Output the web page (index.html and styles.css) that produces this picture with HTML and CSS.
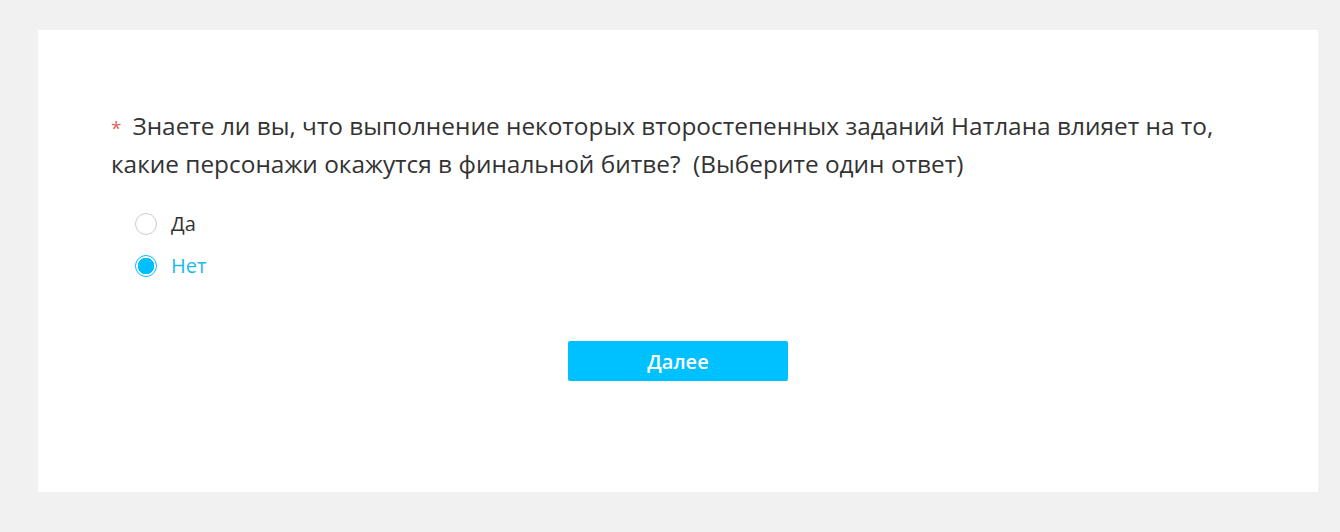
FILE: index.html
```html
<!DOCTYPE html>
<html lang="ru">
  <head>
    <meta charset="UTF-8" />
    <title>Опрос</title>
    <link rel="stylesheet" href="styles.css">
  </head>
  <body>
    <div class="card">
      <div class="question">
        <span class="required">*</span>Знаете ли вы, что выполнение некоторых второстепенных заданий Натлана влияет на то,
        какие персонажи окажутся в финальной битве?&nbsp;&nbsp;(Выберите один ответ)
      </div>

      <div class="options">
        <label class="option">
          <span class="radio"></span>
          <span class="label">Да</span>
        </label>
        <label class="option checked">
          <span class="radio"></span>
          <span class="label">Нет</span>
        </label>
      </div>

      <div class="actions">
        <button class="next">Далее</button>
      </div>
    </div>
  </body>
</html>
```

FILE: styles.css
```css
body {
  margin: 0;
  padding: 30px 22px 40px 38px;
  background: #f1f1f1;
  font-family: "Open Sans", "Noto Sans", sans-serif;
  color: #333;
}
.card {
  background: white;
  width: 1280px;
  height: 462px;
  box-sizing: border-box;
  padding: 77px 73px 0 73px;
}
.question {
  font-size: 24.4px;
  line-height: 38px;
  color: #333;
}
.required {
  display: inline-block;
  color: #e8625e;
  font-size: 19px;
  line-height: 1;
  margin-right: 11px;
}
.options {
  margin-top: 30px;
  padding-left: 24px;
  display: flex;
  flex-direction: column;
  gap: 20px;
}
.option {
  display: flex;
  align-items: center;
  gap: 14px;
  font-size: 20px;
  line-height: 22px;
  cursor: pointer;
}
.radio {
  width: 22px;
  height: 22px;
  box-sizing: border-box;
  border: 1px solid #ccc;
  border-radius: 50%;
  background: white;
}
.option.checked .radio {
  border-color: #00bfff;
  background: radial-gradient(circle, #00bfff 0 8px, white 8.5px);
}
.option.checked .label {
  color: #1cb8f0;
}
.actions {
  margin-top: 64px;
  display: flex;
  justify-content: center;
}
.next {
  width: 220px;
  height: 40px;
  border: none;
  border-radius: 2px;
  background: #00c1ff;
  color: white;
  font-family: inherit;
  font-size: 20px;
  font-weight: 600;
  cursor: pointer;
}
```
